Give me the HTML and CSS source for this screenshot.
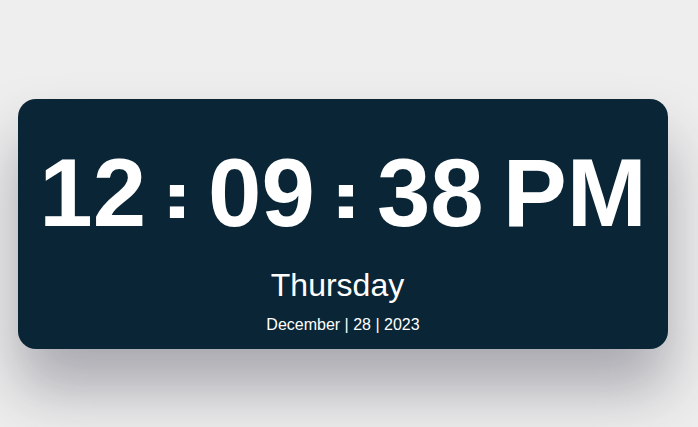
FILE: index.html
```html
<!DOCTYPE html>
<html lang="en">
<head>
<meta charset="utf-8">
<title>Clock</title>
<link rel="stylesheet" href="styles.css">
</head>
<body>
<main class="page">
  <section class="clock">
    <div class="time">
      <span class="num">12</span>
      <span class="sep">:</span>
      <span class="num">09</span>
      <span class="sep">:</span>
      <span class="num">38</span>
      <span class="num">PM</span>
    </div>
    <div class="day">Thursday</div>
    <div class="date">December | 28 | 2023</div>
  </section>
</main>
</body>
</html>
```

FILE: styles.css
```css
* { box-sizing: border-box; }
html, body { margin: 0; padding: 0; }
body {
  background: #eeeeee;
  font-family: "Liberation Sans", Arial, sans-serif;
  height: 427px;
  overflow: hidden;
}
.page {
  padding: 99px 30px 0 18px;
}
.clock {
  width: 650px;
  height: 250px;
  background: #0a2636;
  border-radius: 18px;
  box-shadow: 0 40px 60px rgba(40, 40, 60, 0.35);
  color: #ffffff;
  display: flex;
  flex-direction: column;
  align-items: center;
  padding-top: 46px;
}
.time {
  display: flex;
  justify-content: center;
  align-items: baseline;
  gap: 19px;
  height: 96px;
  font-size: 96px;
  font-weight: 700;
  line-height: 96px;
  white-space: nowrap;
}
.sep {
  font-family: "DejaVu Sans", Verdana, sans-serif;
  font-size: 60px;
  vertical-align: 8px;
  position: relative;
  top: -8px;
  transform: scaleX(1.33);
}
.day {
  font-size: 32px;
  line-height: 32px;
  margin-top: 28px;
  margin-right: 11px;
}
.date {
  font-size: 16px;
  line-height: 16px;
  margin-top: 16px;
}
```
